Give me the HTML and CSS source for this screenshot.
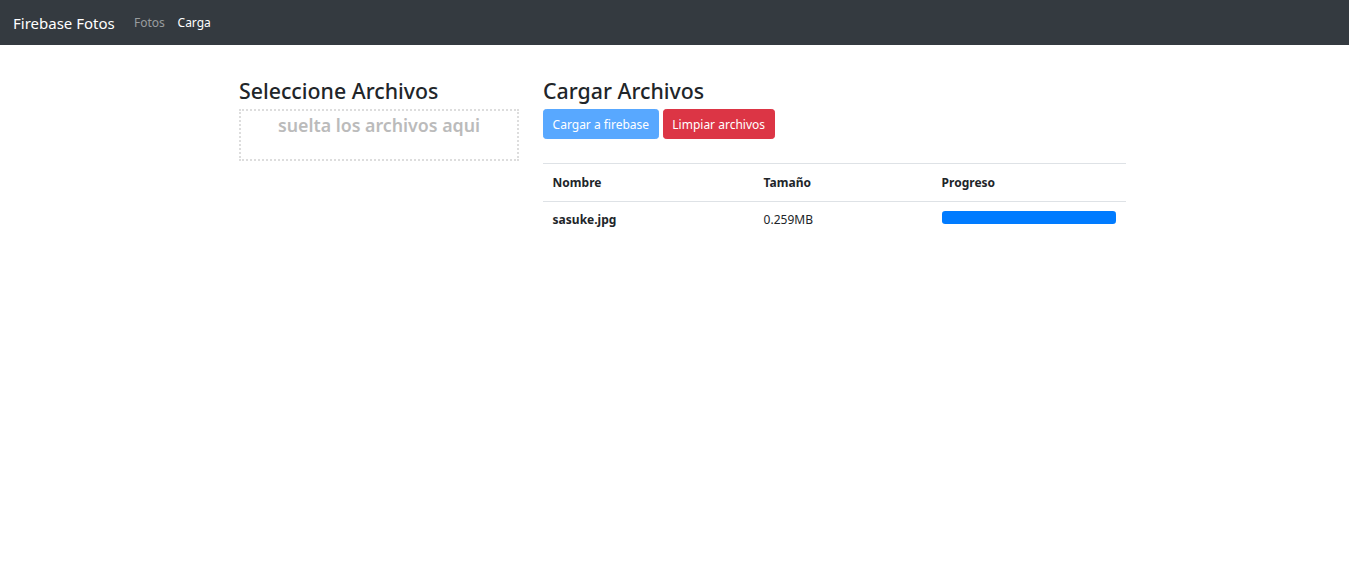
FILE: index.html
```html
<!DOCTYPE html>
<html lang="es">
<head>
<meta charset="utf-8">
<title>Firebase Fotos</title>
<link rel="stylesheet" href="styles.css">
</head>
<body>
<nav class="navbar">
  <a class="brand" href="#">Firebase Fotos</a>
  <ul class="nav">
    <li><a class="nav-link" href="#">Fotos</a></li>
    <li><a class="nav-link active" href="#">Carga</a></li>
  </ul>
</nav>
<main class="content">
  <section class="col-left">
    <h3 class="title">Seleccione Archivos</h3>
    <div class="dropzone">
      <h4 class="drop-text">suelta los archivos aqui</h4>
    </div>
  </section>
  <section class="col-right">
    <h3 class="title">Cargar Archivos</h3>
    <div class="actions">
      <button class="btn btn-primary" disabled>Cargar a firebase</button>
      <button class="btn btn-danger">Limpiar archivos</button>
    </div>
    <table class="table">
      <thead>
        <tr><th class="c1">Nombre</th><th class="c2">Tamaño</th><th class="c3">Progreso</th></tr>
      </thead>
      <tbody>
        <tr>
          <td class="strong">sasuke.jpg</td>
          <td>0.259MB</td>
          <td><div class="progress"><div class="progress-bar" style="width:100%"></div></div></td>
        </tr>
      </tbody>
    </table>
  </section>
</main>
</body>
</html>
```
FILE: styles.css
```css
* { box-sizing: border-box; }
html, body { margin: 0; padding: 0; }
body {
  font-family: "Noto Sans", "Open Sans", "Liberation Sans", sans-serif;
  font-size: 12px;
  line-height: 19.2px;
  color: #212529;
  background: #fff;
}
.navbar {
  height: 45px;
  background: #343a40;
  display: flex;
  align-items: center;
  padding: 0 13px;
}
.brand {
  color: #fff;
  text-decoration: none;
  font-size: 15px;
  margin-right: 12.8px;
  line-height: 24px;
}
.nav {
  list-style: none;
  display: flex;
  margin: 0;
  padding: 0;
}
.nav-link {
  display: block;
  padding: 6.4px 6.4px;
  color: rgba(255,255,255,.5);
  text-decoration: none;
}
.nav-link.active { color: #fff; }

.content {
  display: flex;
  padding-top: 32px;
  padding-left: 239px;
}
.col-left { width: 280px; margin-right: 24px; }
.col-right { width: 583px; }
.title {
  margin: 0 0 5px;
  font-size: 21.3px;
  font-weight: 500;
  line-height: 27px;
}
.dropzone {
  border: 2px dotted #ddd;
  height: 52px;
  text-align: center;
}
.drop-text {
  margin: 3px 0 0;
  font-size: 17.8px;
  font-weight: 600;
  line-height: 23px;
  color: #bbb;
}
.actions { display: flex; gap: 4px; }
.btn {
  font-family: inherit;
  font-size: 12px;
  line-height: 19.2px;
  padding: 4.8px 8.6px;
  border: 1px solid transparent;
  border-radius: 3.2px;
  color: #fff;
  height: 30px;
}
.btn-primary { background: #007bff; border-color: #007bff; opacity: .65; }
.btn-danger { background: #dc3545; border-color: #dc3545; }
.table {
  width: 100%;
  margin-top: 24px;
  border-collapse: collapse;
}
.table th, .table td {
  padding: 9.6px;
  text-align: left;
  vertical-align: top;
  line-height: 18px;
}
.table tbody td { padding-top: 9px; }
.table thead th { border-bottom: 1px solid #dee2e6; border-top: 1px solid #dee2e6; font-weight: 700; }
.c1 { width: 211px; }
.c2 { width: 178px; }
.strong { font-weight: 700; }
.progress {
  height: 12.8px;
  background: #e9ecef;
  border-radius: 3.2px;
  overflow: hidden;
}
.progress-bar { height: 100%; background: #007bff; }
```
